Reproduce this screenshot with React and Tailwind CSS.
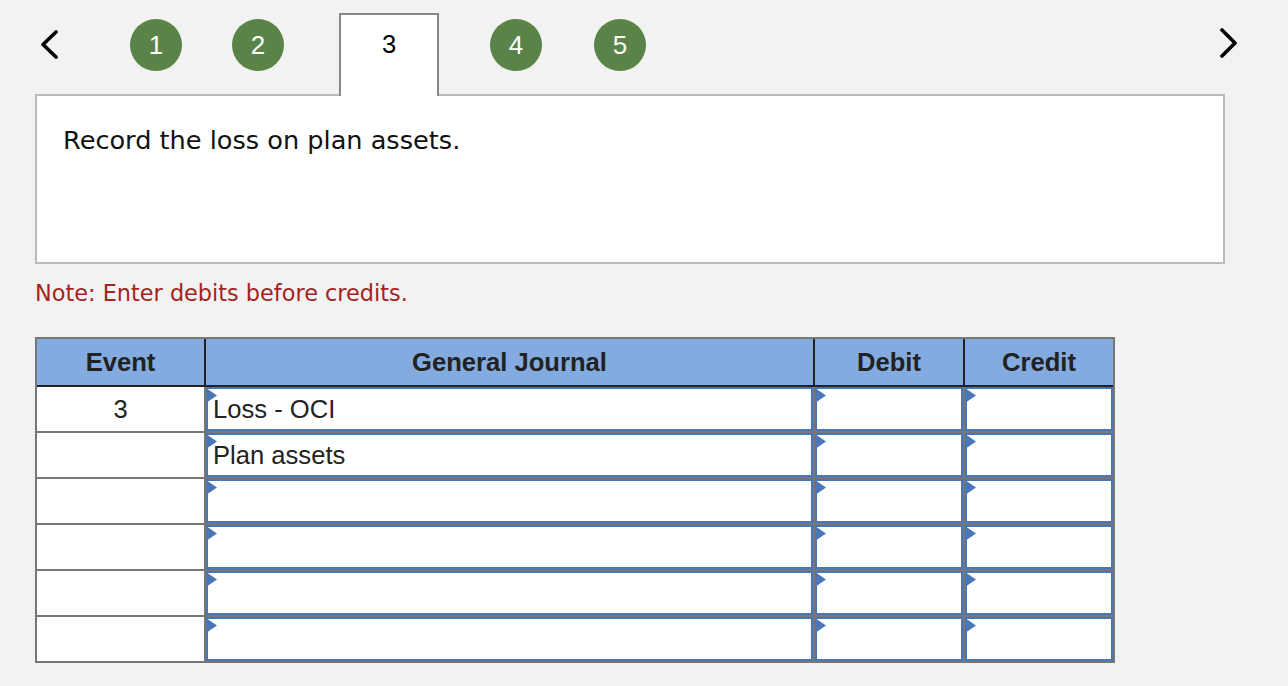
import React from "react";

const arial = { fontFamily: '"Liberation Sans", Arial, sans-serif' };
const verdana = { fontFamily: '"DejaVu Sans", Verdana, sans-serif' };

function Flag() {
  return (
    <svg
      className="absolute -left-[2px] -top-[1px]"
      width="11"
      height="15"
      viewBox="0 0 11 15"
    >
      <polygon points="0,0 11,7.5 0,15" fill="#4a76b8" />
    </svg>
  );
}

function Input({ text }) {
  return (
    <div className="relative h-full w-full bg-white border-2 border-[#4a76b8] flex items-center pl-[5px] text-[25.6px] text-[#222]" style={arial}>
      <Flag />
      {text}
    </div>
  );
}

function Circle({ n, className }) {
  return (
    <div
      className={"w-[52px] h-[52px] rounded-full bg-[#5a8447] text-white flex items-center justify-center text-[26px] mt-[6px] " + className}
      style={arial}
    >
      {n}
    </div>
  );
}

const rows = [
  { event: "3", account: "Loss - OCI" },
  { event: "", account: "Plan assets" },
  { event: "", account: "" },
  { event: "", account: "" },
  { event: "", account: "" },
  { event: "", account: "" },
];

export default function App() {
  return (
    <div className="w-full h-[686px] bg-[#f2f2f2] overflow-hidden">
      {/* Navigation */}
      <div className="flex items-start pt-[13px] pl-[40px] pr-[48px] h-[96px] -mb-[2px] relative z-10">
        <svg width="20" height="30" viewBox="0 0 20 30" className="mt-[17px]">
          <polyline points="16,2 3,14.5 16,27" fill="none" stroke="#000" strokeWidth="3.6" strokeLinecap="round" strokeLinejoin="round" />
        </svg>
        <Circle n="1" className="ml-[70px]" />
        <Circle n="2" className="ml-[50px]" />
        <div
          className="ml-[55px] w-[100px] h-[83px] bg-white border-2 border-b-0 border-[#888] flex justify-center pt-[14px] text-[25.6px] leading-[30px] text-black"
          style={arial}
        >
          3
        </div>
        <Circle n="4" className="ml-[51px]" />
        <Circle n="5" className="ml-[52px]" />
        <svg width="22" height="30" viewBox="0 0 22 30" className="ml-auto mt-[15px]">
          <polyline points="4,2 17,15 4,28" fill="none" stroke="#000" strokeWidth="3.6" strokeLinecap="round" strokeLinejoin="round" />
        </svg>
      </div>

      {/* Question box */}
      <div className="ml-[35px] w-[1190px] h-[170px] bg-white border-2 border-[#bbbbbb] pl-[26px] pt-[29px]">
        <div className="text-[25.6px] leading-[31px] text-[#111]" style={verdana}>
          Record the loss on plan assets.
        </div>
      </div>

      {/* Note */}
      <div className="ml-[35px] mt-[16px] text-[22.4px] leading-[26px] text-[#a32420]" style={verdana}>
        Note: Enter debits before credits.
      </div>

      {/* Table */}
      <div className="ml-[35px] mt-[31px] w-[1080px] border-2 border-[#777] bg-white" style={arial}>
        <div className="flex h-[48px] bg-[#83abe0] border-b-2 border-[#222] text-[25.6px] font-bold text-[#222]">
          <div className="w-[169px] border-r-2 border-[#222] flex items-center justify-center">Event</div>
          <div className="w-[609px] border-r-2 border-[#222] flex items-center justify-center">General Journal</div>
          <div className="w-[150px] border-r-2 border-[#222] flex items-center justify-center">Debit</div>
          <div className="w-[148px] flex items-center justify-center">Credit</div>
        </div>
        {rows.map((r, i) => (
          <div key={i} className={"flex h-[44px] box-content " + (i > 0 ? "border-t-2 border-[#777]" : "")}>
            <div className="w-[169px] border-r-2 border-[#777] flex items-center justify-center text-[25.6px] text-[#222] bg-white">
              {r.event}
            </div>
            <div className="w-[609px] border-r-2 border-[#777]">
              <Input text={r.account} />
            </div>
            <div className="w-[150px] border-r-2 border-[#777]">
              <Input text="" />
            </div>
            <div className="w-[148px]">
              <Input text="" />
            </div>
          </div>
        ))}
      </div>
    </div>
  );
}
